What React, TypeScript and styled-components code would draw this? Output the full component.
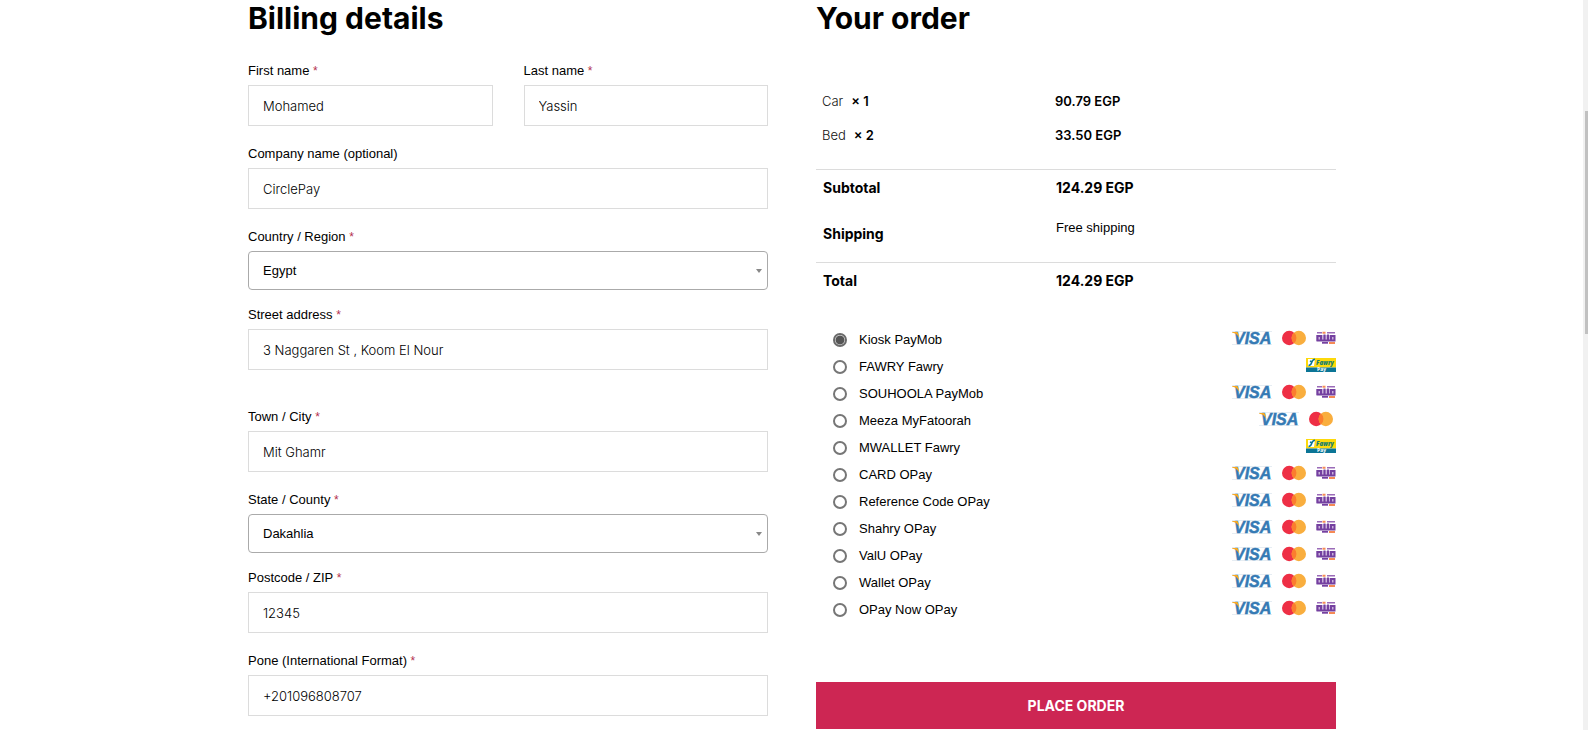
import React, { useState } from "react";
import styled, { createGlobalStyle } from "styled-components";

const inter = `Inter, "Liberation Sans", sans-serif`;
const arial = `"Liberation Sans", Arial, sans-serif`;

const GlobalStyle = createGlobalStyle`
  *, *::before, *::after { box-sizing: border-box; }
  body { margin: 0; background: #fff; color: #000; font: 14px/18px ${arial}; }
`;

const Page = styled.div`
  display: grid;
  grid-template-columns: minmax(0, 1fr) 5px;
  min-height: 100vh;
`;

const ScrollRail = styled.div`
  display: flex;
  flex-direction: column;
  padding-left: 2px;
  background: #f1f1f1;
`;

const ScrollSpace = styled.div<{ $share: number }>`
  flex: ${(p) => p.$share} 0 0;
`;

const ScrollThumb = styled(ScrollSpace)`
  background: #c1c1c1;
`;

const Checkout = styled.form`
  display: grid;
  grid-template-columns: repeat(2, minmax(0, 1fr));
  gap: 48px;
  width: 100%;
  max-width: 1089px;
  margin: 0 auto;
  padding-left: 1px;
  align-items: start;
`;

const Column = styled.section`
  display: flex;
  flex-direction: column;
`;

const Heading = styled.h2`
  margin: 0;
  padding-bottom: 25px;
  font: 700 30px/36px ${inter};
`;

const FieldRow = styled.div`
  display: grid;
  grid-template-columns: repeat(2, minmax(0, 1fr));
  gap: 31px;
`;

const Field = styled.div<{ $after?: number }>`
  display: flex;
  flex-direction: column;
  gap: 5px;
  margin-bottom: ${(p) => p.$after ?? 18}px;
`;

const Label = styled.label`
  font: 13px/19px ${arial};
`;

const Required = styled.span`
  color: #b3304e;
  font-size: 12px;
  line-height: 1;
`;

const TextInput = styled.input`
  width: 100%;
  height: 41px;
  padding: 0 14px;
  border: 1px solid #dcdcdc;
  border-radius: 0;
  background: #fff;
  color: #000;
  font: 300 13px/19px ${inter};
`;

const SelectWrap = styled.div`
  display: grid;
  align-items: center;
  > * { grid-area: 1 / 1; }
`;

const Select = styled.select`
  appearance: none;
  width: 100%;
  height: 39px;
  padding: 0 14px;
  border: 1px solid #aaa;
  border-radius: 4px;
  background: #fff;
  color: #000;
  font: 13px/19px ${arial};
`;

const Arrow = styled.svg`
  justify-self: end;
  margin-right: 6px;
  pointer-events: none;
`;

const Table = styled.table`
  width: 100%;
  margin-top: 23px;
  border-collapse: collapse;
  table-layout: fixed;
`;

const ProductRow = styled.tr`
  height: 34px;
  font: 300 13px/18px ${inter};
`;

const ProductCell = styled.td`
  padding: 0 6px;
  color: #111;
  &:first-child { width: 233px; }
`;

const Strong = styled.strong`
  color: #000;
  font-weight: 600;
`;

const Quantity = styled(Strong)`
  margin-left: 8px;
`;

const TotalRow = styled.tr<{ $height: number; $line?: boolean }>`
  height: ${(p) => p.$height}px;
  border-top: ${(p) => (p.$line ? "1px solid #dcdcdc" : "0")};
  font: 700 14px/18px ${inter};
`;

const TotalHead = styled.th`
  padding: 0 7px;
  text-align: left;
  font-weight: 700;
`;

const TotalCell = styled.td`
  padding: 0 7px;
`;

const ShippingCell = styled(TotalCell)`
  padding-bottom: 13px;
  font: 13px/18px ${arial};
`;

const ProductBody = styled.tbody`
  &::after { content: ""; display: table-row; height: 17px; }
`;

const Methods = styled.ul`
  display: flex;
  flex-direction: column;
  margin: 26px 0 59px;
  padding: 0 0 0 17px;
  list-style: none;
`;

const Method = styled.li`
  display: flex;
  align-items: center;
  justify-content: space-between;
  height: 27px;
`;

const MethodLabel = styled.label`
  display: flex;
  align-items: center;
  gap: 12px;
  font: 13px/19px ${arial};
`;

const Radio = styled.input`
  appearance: none;
  width: 14px;
  height: 14px;
  margin: 0;
  border: 2px solid #767676;
  border-radius: 50%;
  background: #fff;
  &:checked {
    border-color: #6a6a6a;
    background: radial-gradient(circle, #555 4px, #fff 5px);
  }
`;

const Logos = styled.span<{ $inset?: boolean }>`
  display: flex;
  align-items: center;
  gap: 10px;
  padding-right: ${(p) => (p.$inset ? 3 : 0)}px;
  padding-bottom: 3px;
`;

const Logo = styled.svg`
  overflow: visible;
`;

const PlaceOrder = styled.button`
  height: 47px;
  border: 0;
  border-radius: 0;
  background: #cd2653;
  color: #fff;
  font: 700 14px/20px ${inter};
  text-transform: uppercase;
  cursor: pointer;
`;

const Visa = () => (
  <Logo width="40" height="14" viewBox="0 0 40 14" role="img" aria-label="Visa">
    <path d="M0 .500h40M0 13.500h40" stroke="#e6edf3" strokeWidth="1" />
    <text x="2" y="13" fontFamily="Liberation Sans" fontWeight="700" fontStyle="italic" fontSize="16" fill="#357ab4" stroke="#357ab4" strokeWidth=".5">VISA</text>
    <path d="M0 1h4.800q1 0 1.300 1l1.400 5C5.800 4 3.500 2.200 0 1.600z" fill="#f7a823" />
  </Logo>
);

const Mastercard = () => (
  <Logo width="24" height="14" viewBox="0 0 24 14" role="img" aria-label="Mastercard">
    <circle cx="7.200" cy="7" r="7.200" fill="#ee2f45" />
    <circle cx="16.800" cy="7" r="7.200" fill="#f9ae3e" />
    <path d="M12 1.600a7.200 7.200 0 0 1 0 10.800a7.200 7.200 0 0 1 0-10.800z" fill="#fb7d2e" />
  </Logo>
);

const Ollo = () => (
  <Logo width="20" height="14" viewBox="0 0 20 14" role="img" aria-label="Ollo">
    <path d="M0 4h19v6H0z" fill="#c9b1da" />
    <g fill="none" stroke="#7440a0" strokeWidth="2">
      <path d="M1.500 5h3.500v4.500h-3.500z" />
      <path d="M8.500 3.500v6M12 3.500v6M6 9.500h12.500V5h-3.500v4.500" />
    </g>
    <path d="M1 1.800h5M11 1.800h8" stroke="#9a6bb8" strokeWidth="1.500" />
    <path d="M6 11.800h6" stroke="#7440a0" strokeWidth="1.800" />
    <path d="M6.500 1.800h3M13 12h6" stroke="#f58a55" strokeWidth="2" />
  </Logo>
);

const Fawry = () => (
  <Logo width="30" height="14" viewBox="0 0 30 14" role="img" aria-label="Fawry Pay">
    <path d="M0 0h30v9.500H0z" fill="#fdd90b" />
    <path d="M0 9.500h30V14H0z" fill="#0b7596" />
    <path d="M2 1h7L8 8H2z" fill="#fff" />
    <path d="M2.500 7.500c2.500 0 2.800-1.500 3.300-3.200S7 1.500 9 1.300M4 3l2 1" fill="none" stroke="#0b7596" strokeWidth="1.500" />
    <text x="10" y="7" fontFamily="Open Sans" fontWeight="800" fontStyle="italic" fontSize="6" fill="#17806d">Fawry</text>
    <text x="11" y="13" fontFamily="Open Sans" fontWeight="700" fontSize="5" fill="#fff">Pay</text>
  </Logo>
);

type LogoSet = "cards" | "fawry" | "pair";

const methods: { name: string; logos: LogoSet }[] = [
  { name: "Kiosk PayMob", logos: "cards" },
  { name: "FAWRY Fawry", logos: "fawry" },
  { name: "SOUHOOLA PayMob", logos: "cards" },
  { name: "Meeza MyFatoorah", logos: "pair" },
  { name: "MWALLET Fawry", logos: "fawry" },
  { name: "CARD OPay", logos: "cards" },
  { name: "Reference Code OPay", logos: "cards" },
  { name: "Shahry OPay", logos: "cards" },
  { name: "ValU OPay", logos: "cards" },
  { name: "Wallet OPay", logos: "cards" },
  { name: "OPay Now OPay", logos: "cards" },
];

const products = [
  { name: "Car", quantity: 1, price: "90.79 EGP" },
  { name: "Bed", quantity: 2, price: "33.50 EGP" },
];

interface FieldProps {
  id: string;
  label: string;
  value: string;
  required?: boolean;
  after?: number;
}

const FieldLabel = ({ id, label, required = true }: Pick<FieldProps, "id" | "label" | "required">) => (
  <Label htmlFor={id}>
    {label} {required && <Required>*</Required>}
  </Label>
);

const TextField = ({ id, label, value, required, after }: FieldProps) => (
  <Field $after={after}>
    <FieldLabel id={id} label={label} required={required} />
    <TextInput id={id} defaultValue={value} />
  </Field>
);

const SelectField = ({ id, label, value }: FieldProps) => (
  <Field $after={15}>
    <FieldLabel id={id} label={label} />
    <SelectWrap>
      <Select id={id} defaultValue={value}>
        <option>{value}</option>
      </Select>
      <Arrow width="6" height="4" viewBox="0 0 6 4" aria-hidden="true">
        <path d="M0 0h6L3 4z" fill="#888" />
      </Arrow>
    </SelectWrap>
  </Field>
);

export default function App() {
  const [method, setMethod] = useState("Kiosk PayMob");
  return (
    <>
      <GlobalStyle />
      <Page>
        <Checkout onSubmit={(e) => e.preventDefault()}>
          <Column>
            <Heading>Billing details</Heading>
            <FieldRow>
              <TextField id="first-name" label="First name" value="Mohamed" />
              <TextField id="last-name" label="Last name" value="Yassin" />
            </FieldRow>
            <TextField id="company" label="Company name (optional)" value="CirclePay" required={false} />
            <SelectField id="country" label="Country / Region" value="Egypt" />
            <TextField id="street" label="Street address" value="3 Naggaren St , Koom El Nour" after={37} />
            <TextField id="city" label="Town / City" value="Mit Ghamr" />
            <SelectField id="state" label="State / County" value="Dakahlia" />
            <TextField id="postcode" label="Postcode / ZIP" value="12345" />
            <TextField id="phone" label="Pone (International Format)" value="+201096808707" after={0} />
          </Column>
          <Column>
            <Heading>Your order</Heading>
            <Table>
              <ProductBody>
                {products.map((p) => (
                  <ProductRow key={p.name}>
                    <ProductCell>
                      {p.name}
                      <Quantity>× {p.quantity}</Quantity>
                    </ProductCell>
                    <ProductCell>
                      <Strong>{p.price}</Strong>
                    </ProductCell>
                  </ProductRow>
                ))}
              </ProductBody>
              <tbody>
                <TotalRow $height={38} $line>
                  <TotalHead scope="row">Subtotal</TotalHead>
                  <TotalCell>124.29 EGP</TotalCell>
                </TotalRow>
                <TotalRow $height={55}>
                  <TotalHead scope="row">Shipping</TotalHead>
                  <ShippingCell>Free shipping</ShippingCell>
                </TotalRow>
                <TotalRow $height={38} $line>
                  <TotalHead scope="row">Total</TotalHead>
                  <TotalCell>124.29 EGP</TotalCell>
                </TotalRow>
              </tbody>
            </Table>
            <Methods>
              {methods.map(({ name, logos }) => (
                <Method key={name}>
                  <MethodLabel>
                    <Radio type="radio" name="payment" checked={method === name} onChange={() => setMethod(name)} />
                    {name}
                  </MethodLabel>
                  <Logos $inset={logos === "pair"}>
                    {logos === "fawry" ? (
                      <Fawry />
                    ) : (
                      <>
                        <Visa />
                        <Mastercard />
                        {logos === "cards" && <Ollo />}
                      </>
                    )}
                  </Logos>
                </Method>
              ))}
            </Methods>
            <PlaceOrder type="submit">Place order</PlaceOrder>
          </Column>
        </Checkout>
        <ScrollRail aria-hidden="true">
          <ScrollSpace $share={111} />
          <ScrollThumb $share={223} />
          <ScrollSpace $share={396} />
        </ScrollRail>
      </Page>
    </>
  );
}
